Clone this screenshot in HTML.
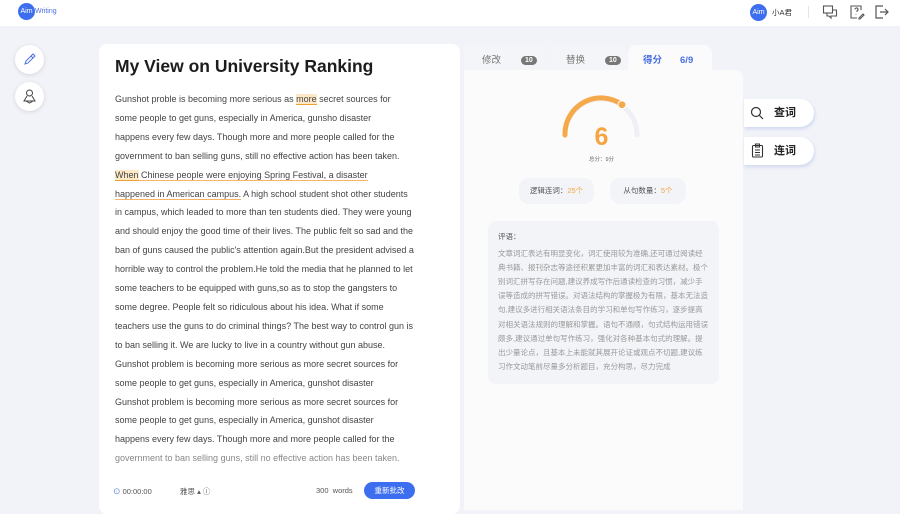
<!DOCTYPE html>
<html><head><meta charset="utf-8"><style>
*{margin:0;padding:0;box-sizing:border-box}
body{width:900px;height:506px;overflow:hidden;background:#f1f3f8;font-family:"Liberation Sans","Noto Sans CJK SC",sans-serif;position:relative}
.hdr{position:absolute;left:0;top:0;width:900px;height:26px;background:#fff}
.abs{position:absolute}
.circ{position:absolute;width:29px;height:29px;border-radius:50%;background:#fff;box-shadow:0 1px 5px rgba(0,0,0,.12)}
.card{position:absolute;left:99px;top:44px;width:361px;height:470px;background:#fff;border-radius:8px}
.title{position:absolute;left:16px;top:12px;font-size:17.5px;font-weight:bold;color:#1c1c1c;letter-spacing:0}
.txt{position:absolute;left:16px;top:46px;width:310px;font-size:9px;line-height:18.9px;color:#444;white-space:nowrap}
.hl{background:#fde9c8;border-bottom:1px solid #f0a030}
.ul{border-bottom:1.5px solid #f5b566}
.tab{position:absolute;top:45px;height:30px;border-radius:8px 8px 0 0;font-size:9.5px;color:#777}
.panel{position:absolute;left:464px;top:70px;width:279px;height:440px;background:#fbfbfc;border-radius:0 8px 0 0}
.badge{display:inline-block;background:#777;color:#fff;border-radius:6px;font-size:7px;font-weight:bold;padding:1px 4px;margin-left:20px;vertical-align:1px}
.pill{position:absolute;height:26px;border-radius:10px;background:#f2f4f8;font-size:7.5px;color:#555;line-height:26px;text-align:center}
.side{position:absolute;left:744px;width:70px;height:28px;background:#fff;border-radius:0 14px 14px 0;box-shadow:1px 2px 3px rgba(120,140,220,.25);font-size:11px;font-weight:bold;color:#222;line-height:28px}
</style></head><body>
<div class="hdr"></div>
<div class="abs" style="left:18px;top:3px;width:17px;height:17px;border-radius:50%;background:#3d6ef0;color:#fff;font-size:7px;line-height:17px;text-align:center">Aim</div>
<div class="abs" style="left:35px;top:8px;font-size:7px;color:#4a6fe0">Writing</div>
<div class="abs" style="left:750px;top:4px;width:17px;height:17px;border-radius:50%;background:#3d6ef0;color:#fff;font-size:7px;line-height:17px;text-align:center">Aim</div>
<div class="abs" style="left:772px;top:7px;font-size:7.5px;color:#333">小A君</div>
<div class="abs" style="left:808px;top:6px;width:1px;height:12px;background:#e5e5e5"></div>
<svg class="abs" style="left:822px;top:4px" width="16" height="16" viewBox="0 0 16 16" fill="none" stroke="#555" stroke-width="1.1"><rect x="1.5" y="2" width="9" height="7"/><path d="M5 9v3h2l2 2v-2h5.5V6h-4"/></svg>
<svg class="abs" style="left:849px;top:4px" width="16" height="16" viewBox="0 0 16 16" fill="none" stroke="#555" stroke-width="1.1"><path d="M12 6V2H2v12h6"/><path d="M6 5.5a1.5 1.5 0 1 1 2 1.4V8M7 10v.5"/><path d="M10 14l4-4 1 1-4 4h-1z"/></svg>
<svg class="abs" style="left:874px;top:4px" width="16" height="16" viewBox="0 0 16 16" fill="none" stroke="#555" stroke-width="1.2"><path d="M9 2H2v12h7M6 8h8M11 5l3 3-3 3"/></svg>

<div class="circ" style="left:15px;top:45px"><svg width="29" height="29" viewBox="0 0 29 29" fill="none" stroke="#4a6fe0" stroke-width="1"><path d="M10 19l1-3 7-7 2 2-7 7z M16 11l2 2"/></svg></div>
<div class="circ" style="left:15px;top:82px"><svg width="29" height="29" viewBox="0 0 29 29" fill="none" stroke="#444" stroke-width="1"><circle cx="14.5" cy="11" r="3"/><path d="M12 14l-3 5h11l-3-5M11 19l3.5 2 3.5-2"/></svg></div>

<div class="card">
<div class="title">My View on University Ranking</div>
<div class="txt">Gunshot proble is becoming more serious as <span class="hl">more</span> secret sources for<br>some people to get guns, especially in America, gunsho disaster<br>happens every few days. Though more and more people called for the<br>government to ban selling guns, still no effective action has been taken.<br><span class="ul"><span class="hl">When</span> Chinese people were enjoying Spring Festival, a disaster</span><br><span class="ul">happened in American campus.</span> A high school student shot other students<br>in campus, which leaded to more than ten students died. They were young<br>and should enjoy the good time of their lives. The public felt so sad and the<br>ban of guns caused the public's attention again.But the president advised a<br>horrible way to control the problem.He told the media that he planned to let<br>some teachers to be equipped with guns,so as to stop the gangsters to<br>some degree. People felt so ridiculous about his idea. What if some<br>teachers use the guns to do criminal things? The best way to control gun is<br>to ban selling it. We are lucky to live in a country without gun abuse.<br>Gunshot problem is becoming more serious as more secret sources for<br>some people to get guns, especially in America, gunshot disaster<br>Gunshot problem is becoming more serious as more secret sources for<br>some people to get guns, especially in America, gunshot disaster<br>happens every few days. Though more and more people called for the<br><span style="color:#888">government to ban selling guns, still no effective action has been taken.</span></div>
<div class="abs" style="left:14px;top:442px;font-size:7.5px;color:#555"><span style="color:#4a6fe0">⊙</span> 00:00:00</div>
<div class="abs" style="left:81px;top:442px;font-size:7.5px;color:#555">雅思 ▴ ⓘ</div>
<div class="abs" style="left:217px;top:442px;font-size:7.5px;color:#555">300&nbsp; words</div>
<div class="abs" style="left:265px;top:438px;width:51px;height:17px;border-radius:9px;background:#3d6ef0;color:#fff;font-size:7.5px;line-height:17px;text-align:center">重新批改</div>
</div>

<div class="tab" style="left:464px;width:82px;background:#f4f5f8;padding:7px 0 0 18px">修改<span class="badge">10</span></div>
<div class="tab" style="left:547px;width:80px;background:#f4f5f8;padding:7px 0 0 19px">替换<span class="badge">10</span></div>
<div class="tab" style="left:628px;width:84px;background:#fbfbfc;padding:7px 0 0 15px;color:#4a6fe0;font-weight:bold">得分<span style="margin-left:18px">6/9</span></div>
<div class="panel">
<svg class="abs" style="left:92px;top:22px" width="90" height="80" viewBox="0 0 90 80" fill="none"><path d="M9 43 A36 36 0 0 1 81 43" stroke="#eef0f4" stroke-width="5" stroke-linecap="round"/><path d="M9 43 A36 36 0 0 1 66 12.7" stroke="#f5a94a" stroke-width="5" stroke-linecap="round"/><circle cx="66" cy="12.7" r="4" fill="#f5a94a" stroke="#fff" stroke-width="1"/></svg>
<div class="abs" style="left:0;width:275px;top:53px;text-align:center;font-size:25px;font-weight:bold;color:#f5a440">6</div>
<div class="abs" style="left:0;width:275px;top:85px;text-align:center;font-size:5.5px;color:#666">总分：9分</div>
<div class="pill" style="left:55px;top:108px;width:75px">逻辑连词：<span style="color:#f5a440">25个</span></div>
<div class="pill" style="left:146px;top:108px;width:76px">从句数量：<span style="color:#f5a440">5个</span></div>
<div class="abs" style="left:24px;top:151px;width:231px;height:163px;background:#f2f4f8;border-radius:8px;padding:9px 10px;font-size:7.5px;line-height:14.1px;color:#999"><div style="color:#555;margin-bottom:3px">评语：</div>文章词汇表达有明显变化，词汇使用较为准确,还可通过阅读经典书籍、报刊杂志等途径积累更加丰富的词汇和表达素材。极个别词汇拼写存在问题,建议养成写作后通读检查的习惯，减少手误等造成的拼写错误。对语法结构的掌握极为有限，基本无法造句,建议多进行相关语法条目的学习和单句写作练习，逐步提高对相关语法规则的理解和掌握。语句不通顺，句式结构运用错误颇多,建议通过单句写作练习，强化对各种基本句式的理解。提出少量论点，且基本上未能就其展开论证或观点不切题,建议练习作文动笔前尽量多分析题目，充分构思，尽力完成</div>
</div>
<div class="side" style="top:99px"><svg class="abs" style="left:6px;top:7px" width="14" height="14" viewBox="0 0 14 14" fill="none" stroke="#333" stroke-width="1.2"><circle cx="6" cy="6" r="4.5"/><path d="M9.5 9.5L13 13"/></svg><span style="margin-left:30px">查词</span></div>
<div class="side" style="top:137px"><svg class="abs" style="left:7px;top:6px" width="13" height="15" viewBox="0 0 13 15" fill="none" stroke="#333" stroke-width="1.1"><rect x="1.5" y="2.5" width="10" height="11.5" rx="1"/><path d="M4.5 1h4v3h-4zM4 7h5M4 9.5h5M4 12h5"/></svg><span style="margin-left:30px">连词</span></div>
</body></html>
